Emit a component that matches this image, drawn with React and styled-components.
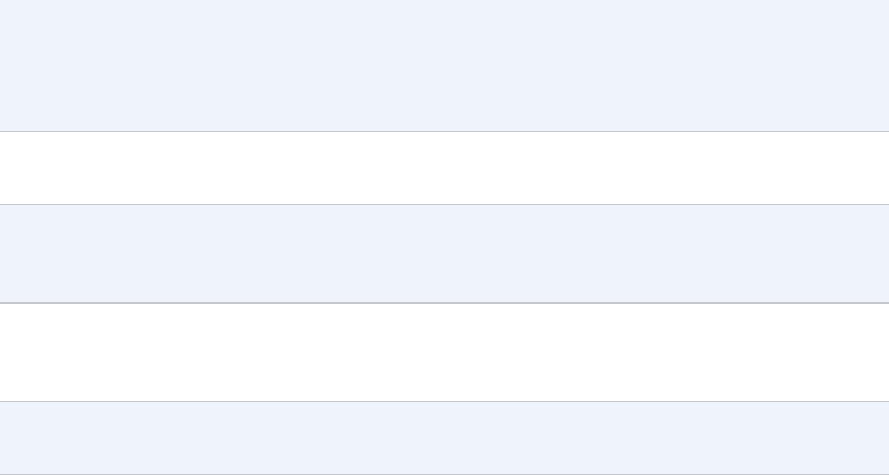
import React from "react";
import styled, { createGlobalStyle } from "styled-components";

const Global = createGlobalStyle`
  html, body { margin: 0; padding: 0; background: #ffffff; }
  body { font-family: "Liberation Sans", Arial, sans-serif; }
`;

const Table = styled.div`
  display: flex;
  flex-direction: column;
  width: 889px;
`;

const Row = styled.div`
  height: ${(p) => p.$h}px;
  background: ${(p) => (p.$shaded ? "#eff4fc" : "#ffffff")};
  border-bottom: ${(p) => p.$bw || 1}px solid #c4c7cc;
  box-sizing: content-box;
`;

const rows = [
  { h: 131, shaded: true },
  { h: 72, shaded: false },
  { h: 97, shaded: true, bw: 2 },
  { h: 97, shaded: false },
  { h: 72, shaded: true },
];

export default function App() {
  return (
    <>
      <Global />
      <Table>
        {rows.map((r, i) => (
          <Row key={i} $h={r.h} $shaded={r.shaded} $bw={r.bw} />
        ))}
      </Table>
    </>
  );
}
